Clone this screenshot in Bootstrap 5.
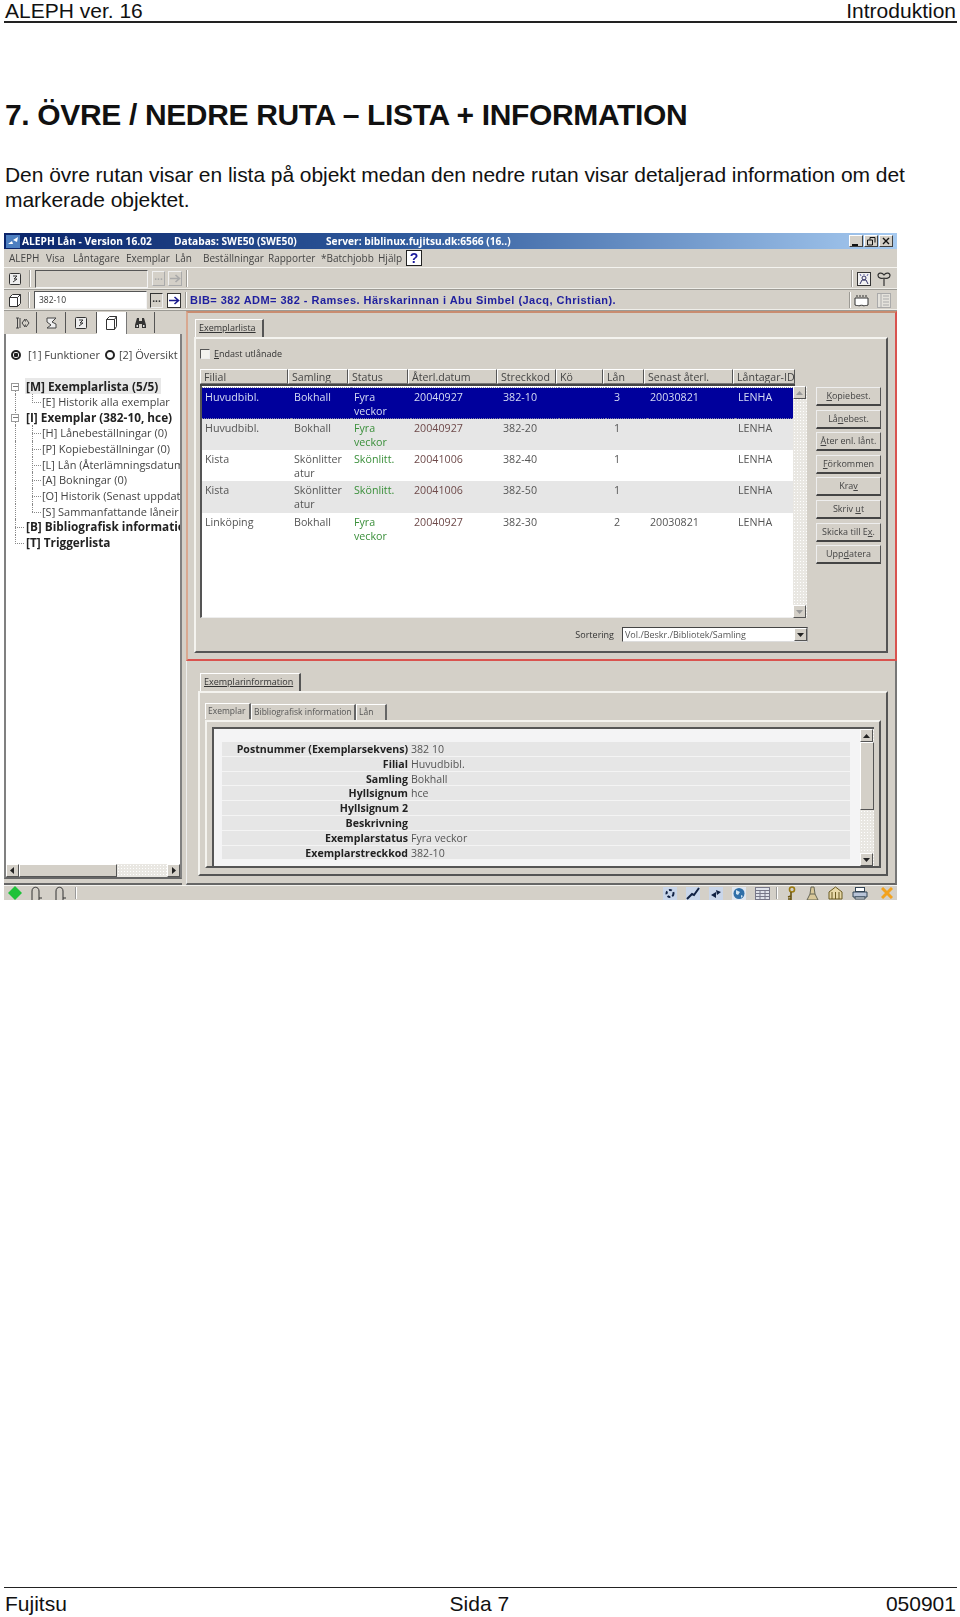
<!DOCTYPE html>
<html lang="sv">
<head>
  <meta charset="UTF-8">
  <title>ALEPH ver. 16 – Introduktion</title>
  <link href="https://cdn.jsdelivr.net/npm/bootstrap@5.3.2/dist/css/bootstrap.min.css" rel="stylesheet" />
  <style>
    html, body { height: 100%; }
    body {
      font-family: "Liberation Sans", Arial, sans-serif;
      background: #fff;
      color: #111;
      height: 1617px;
      overflow: hidden;
      padding: 0 3px 0 4px;
    }
    .page-head {
      height: 23px;
      border-bottom: 2px solid #222;
      font-size: 21px;
      line-height: 22px;
      padding: 0 1px;
    }
    .page-title {
      font-size: 30px;
      font-weight: 700;
      line-height: 34px;
      margin: 75px 0 0 1px;
      letter-spacing: -0.35px;
      white-space: nowrap;
    }
    .page-text {
      font-size: 21px;
      line-height: 25px;
      margin: 30px 0 0 1px;
      letter-spacing: -0.05px;
    }
    .page-foot {
      margin-top: auto;
      height: 30px;
      border-top: 1px solid #222;
      font-size: 21px;
      line-height: 31px;
      padding: 0 1px;
    }
    .foot-mid { margin-left: 6px; }

    /* the application window */
    .app {
      width: 893px;
      height: 667px;
      margin-top: 21px;
      background: #d4d0c8;
      color: #333;
      font-family: "Open Sans", "Liberation Sans", sans-serif;
      font-size: 10.5px;
      filter: blur(.35px);
      overflow: hidden;
      flex: none;
    }
    .app-title {
      height: 16px;
      background: linear-gradient(90deg, #0a246a 0%, #2f5a9c 45%, #a6caf0 100%);
      color: #fff;
      font-size: 10.2px;
      font-weight: 700;
      line-height: 16px;
      padding-left: 2px;
      white-space: nowrap;
    }
    .title-ico { margin-right: 2px; }
    .title-a, .title-b { width: 152px; }
    .win-ctrls { margin-right: 4px; }
    .win-btn {
      width: 14px;
      height: 12px;
      background: #d4d0c8;
      border: 1px solid;
      border-color: #fff #404040 #404040 #fff;
      margin-left: 1px;
    }
    .app-menu {
      height: 19px;
      line-height: 18px;
      padding-left: 5px;
      color: #444;
      border-bottom: 1px solid #f4f3ef;
      font-size: 10px;
    }
    .app-menu span:nth-child(1) { width: 37px; }
    .app-menu span:nth-child(2) { width: 27px; }
    .app-menu span:nth-child(3) { width: 53px; }
    .app-menu span:nth-child(4) { width: 49px; }
    .app-menu span:nth-child(5) { width: 28px; }
    .app-menu span:nth-child(6) { width: 65px; }
    .app-menu span:nth-child(7) { width: 53px; }
    .app-menu span:nth-child(8) { width: 57px; }
    .app-menu span:nth-child(9) { width: 28px; }
    .help-btn {
      width: 16px;
      height: 16px;
      background: #fff;
      border: 1px solid #222;
      color: #1a1a9c;
      font: 700 14px/14px "Liberation Sans", sans-serif;
      text-align: center;
    }
    .tool-row {
      border-bottom: 1px solid #9c9a94;
      box-shadow: inset 0 -1px 0 #efeee9;
    }
    .tool-a { height: 22px; }
    .tool-b { height: 21px; }
    .tool-sep {
      width: 2px;
      align-self: stretch;
      margin: 2px 0;
      border-left: 1px solid #9c9a94;
      border-right: 1px solid #fff;
    }
    .tool-input {
      width: 113px;
      height: 18px;
      margin-left: 4px;
      border: 1px solid;
      border-color: #555 #f4f4f4 #f4f4f4 #555;
      font-size: 8.5px;
      line-height: 16px;
      padding-left: 4px;
    }
    .dots-btn, .go-btn {
      height: 15px;
      border: 1px solid;
      border-color: #fff #555 #555 #fff;
      background: #d4d0c8;
      text-align: center;
      line-height: 9px;
      font-weight: 700;
      font-size: 10px;
    }
    .dots-btn { width: 13px; margin-left: 4px; }
    .go-btn { width: 14px; margin-left: 3px; }
    .is-off { color: #aaa; border-color: #f0f0f0 #aaa #aaa #f0f0f0; }
    .is-sunken { border-color: #333 #eee #eee #333; margin-left: 3px; }
    .go-btn.is-live { border-color: #333; margin-left: 4px; }
    .ico-a { margin: 0 8px 0 5px; }
    .ico-b { margin: 0 6px 0 4px; }
    .ico-c { margin-right: 6px; }
    .ico-d { margin: 0 8px 0 3px; }
    .bib-line {
      font: 700 11px/20px "Liberation Sans", sans-serif;
      color: #1e1e9e;
      letter-spacing: .47px;
      white-space: nowrap;
      margin-left: 3px;
    }
    .bib-sep { margin-left: 4px; }

    /* left pane */
    .left-pane { width: 178px; height: 574px; border-bottom: 2px solid #666; }
    .left-tabs { padding-left: 4px; }
    .left-tab {
      height: 21px;
      width: 29px;
      border-right: 1px solid #555;
      margin-top: 1px;
    }
    .left-tab:nth-child(3) { width: 31px; }
    .left-tab:nth-child(4) { width: 30px; }
    .left-tab:nth-child(5) { width: 28px; }
    .left-tab.is-on { background: #fff; height: 22px; border-right-color: #777; }
    .left-body {
      height: 530px;
      background: #fff;
      border-left: 2px solid #808080;
      border-right: 2px solid #808080;
      overflow: hidden;
      font-size: 11px;
      color: #444;
    }
    .radio-row { padding: 13px 0 0 5px; height: 44.5px; white-space: nowrap; line-height: 16px; }
    .win-radio {
      display: inline-block;
      width: 10px;
      height: 10px;
      border: 2px solid #222;
      border-radius: 50%;
      margin-right: 7px;
      vertical-align: -1px;
    }
    .win-radio.is-second { margin-left: 2px; margin-right: 4px; }
    .win-radio.is-on { background: radial-gradient(circle, #222 0 2px, #fff 2.5px); }
    .tree-row { height: 15.65px; line-height: 15.65px; white-space: nowrap; }
    .tree-gut { flex: none; position: relative; height: 100%; }
    .tree-gut.g1 { width: 20px; }
    .tree-gut.g2 { width: 36px; }
    .tree-v { position: absolute; top: 0; bottom: 0; border-left: 1px dotted #888; }
    .tree-v.v1 { left: 9px; }
    .tree-v.v2 { left: 26px; }
    .tree-v.v-first { top: 8px; }
    .tree-v.v-last { bottom: 7px; }
    .tree-h { position: absolute; top: 8px; width: 9px; height: 0; border-top: 1px dotted #888; }
    .tree-h.h1 { left: 9px; }
    .tree-h.h2 { left: 26px; }
    .tree-plus {
      position: absolute;
      left: 5px;
      top: 4px;
      width: 8px;
      height: 8px;
      border: 1px solid #999;
      background: linear-gradient(#777, #777) center / 5px 1px no-repeat #fff;
    }
    .tree-b { font-weight: 700; color: #222; font-size: 11.8px; }
    .tree-hi { background: #e8e8e8; padding-right: 3px; margin-left: -1px; padding-left: 1px; }
    .win-scroll-h {
      height: 15px;
      background: #d4d0c8;
      border-left: 2px solid #808080;
      border-right: 2px solid #808080;
      border-bottom: 2px solid #666;
    }
    .sb-btn {
      width: 13px;
      height: 13px;
      background: #d4d0c8;
      border: 1px solid;
      border-color: #fff #555 #555 #fff;
      display: flex;
      align-items: center;
      justify-content: center;
      flex: none;
    }
    .sb-track {
      background-color: #e9e7e2;
      background-image: radial-gradient(#fff 1px, transparent 1px);
      background-size: 3px 3px;
    }
    .sb-thumb { background: #d4d0c8; border: 1px solid; border-color: #fff #555 #555 #fff; }
    .win-scroll-h .sb-thumb { width: 98px; }

    /* upper pane */
    .right-col { width: 711px; margin-left: 4px; }
    .pane-top {
      height: 350px;
      border: 2px solid;
      border-color: #c98c70 #d9534f #d9534f #d8a890;
      padding: 6px 7px 6px 6px;
    }
    .win-tab {
      display: inline-block;
      background: #d4d0c8;
      border-top: 1px solid #fff;
      border-left: 1px solid #fff;
      border-right: 2px solid #555;
      height: 18px;
      line-height: 16px;
      font-size: 9px;
      padding: 0 6px 0 3px;
      vertical-align: top;
      margin-left: 1px;
    }
    .win-group {
      border: 1px solid;
      border-color: #f4f3ef #555 #555 #f4f3ef;
      border-width: 2px;
    }
    .upper-group { height: 316px; padding: 10px 0 0 4px; }
    .check-row { height: 10px; line-height: 10px; font-size: 9px; }
    .win-check {
      width: 10px;
      height: 10px;
      background: #f4f3ef;
      border: 1px solid;
      border-color: #555 #eee #eee #555;
      margin-right: 4px;
    }
    .list-head {
      width: 595px;
      height: 17px;
      margin-top: 10px;
      border-bottom: 2px solid #444;
    }
    .list-head > div {
      flex: none;
      height: 15px;
      line-height: 14px;
      padding-left: 3px;
      border: 1px solid;
      border-color: #fff #555 #777 #fff;
      font-size: 10.6px;
      overflow: hidden;
      white-space: nowrap;
      color: #444;
    }
    .list-head > div:nth-child(1) { width: 88px; }
    .list-head > div:nth-child(2),
    .list-head > div:nth-child(3) { width: 60px; }
    .list-head > div:nth-child(4),
    .list-head > div:nth-child(8) { width: 89px; }
    .list-head > div:nth-child(5) { width: 59px; }
    .list-head > div:nth-child(6) { width: 47px; }
    .list-head > div:nth-child(7) { width: 41px; }
    .list-head > div:nth-child(9) { width: 62px; }
    .list-body { height: 232px; width: 607px; }
    .list-table-wrap {
      width: 593px;
      background: #fff;
      border-left: 2px solid #555;
      border-bottom: 1px solid #eee;
    }
    .table.list-table {
      table-layout: fixed;
      width: 591px;
      margin: 1px 0 0;
      --bs-table-bg: transparent;
      font-size: 10.7px;
      line-height: 14px;
      color: #555;
    }
    .list-table col:nth-child(1),
    .list-table col:nth-child(4) { width: 89px; }
    .list-table col:nth-child(2),
    .list-table col:nth-child(3) { width: 60px; }
    .list-table col:nth-child(5) { width: 59px; }
    .list-table col:nth-child(6) { width: 47px; }
    .list-table col:nth-child(7) { width: 41px; }
    .list-table col:nth-child(8) { width: 88px; }
    .table.list-table td {
      padding: 2px 0 0 3px;
      height: 31.3px;
      border: 0;
      vertical-align: top;
      box-shadow: none;
      color: #555;
    }
    .table.list-table tr.is-alt td { background: #e6e6e6; }
    .table.list-table td.is-green { color: #3a8f3a; padding-right: 12px; }
    .table.list-table td.is-date { color: #6e4a4a; }
    .table.list-table tr.is-sel td {
      background: #00009c;
      color: #d6dcf4;
      border-top: 1px dotted #88a;
      border-bottom: 1px dotted #88a;
    }
    .win-scroll-v { width: 14px; background-color: #e9e7e2; flex: none; }
    .side-btns { width: 65px; gap: 3.6px; margin: 28px 0 0 9px; }
    .btn.win-btnx {
      height: 19px;
      padding: 0;
      font-size: 9px;
      line-height: 16px;
      color: #444;
      background: #d4d0c8;
      border: 1px solid;
      border-color: #eee #555 #444 #eee;
      border-width: 1px 1px 2px 1px;
      border-radius: 0;
    }
    .sort-row { width: 608px; height: 15px; margin-top: 9px; font-size: 9px; }
    .sort-box {
      width: 186px;
      height: 15px;
      margin-left: 8px;
      background: #fff;
      border: 1px solid;
      border-color: #444 #999 #ddd #444;
      line-height: 13px;
      padding-left: 2px;
      font-size: 9px;
      color: #555;
    }
    .sort-box .sb-btn { margin-left: auto; }

    /* lower pane */
    .pane-low {
      height: 224px;
      border-right: 2px solid #777;
      border-bottom: 2px solid #666;
      padding: 12px 7px 0 11px;
      border-left: 1px solid #eee;
    }
    .pane-low .win-tab { margin-left: 2px; }
    .lower-group { height: 185px; padding: 11px 5px 0 5px; }
    .inner-tab-row { height: 16px; }
    .inner-tab {
      height: 16px;
      line-height: 14px;
      font-size: 8.5px;
      padding-left: 2px;
      border-top: 1px solid #fff;
      border-left: 1px solid #fff;
      border-right: 2px solid #666;
      color: #555;
      white-space: nowrap;
    }
    .inner-tab:nth-child(1) { width: 46px; margin-top: -1px; }
    .inner-tab:nth-child(2) { width: 105px; }
    .inner-tab:nth-child(3) { width: 31px; }
    .inner-group { height: 148px; padding: 5px 5px 0 5px; }
    .info-box {
      height: 139px;
      background: #f4f4f5;
      border-left: 2px solid #555;
      border-top: 2px solid #555;
      padding-top: 13px;
    }
    .info-rows { width: 630px; margin: 0 10px 0 8px; }
    .info-row {
      height: 14.8px;
      line-height: 14px;
      background: #e6e6e6;
      border-bottom: 1px solid #f4f4f4;
      white-space: nowrap;
      font-size: 10.6px;
      color: #555;
    }
    .info-label { width: 186px; text-align: right; font-weight: 700; color: #222; margin-right: 3px; flex: none; }
    .info-scroll { margin-top: -13px; }
    .info-scroll .sb-thumb { height: 68px; }

    /* status bar */
    .status-bar { height: 15px; border-top: 1px solid #f4f3ef; padding-left: 4px; }
    .status-sep { width: 2px; height: 12px; border-left: 1px solid #999; border-right: 1px solid #fff; }
    .status-right { gap: 9px; padding-right: 4px; }
    .status-right .status-sep { margin: 0 -2px 0 -3px; }
    .book-a { margin-left: 8px; }
    .book-b { margin-left: 10px; }
    .book-sep { margin-left: 7px; }
    .print-gap { margin-right: 4px; }
    .abs-ico { flex: none; display: block; }
  </style>
  <script src="https://cdn.jsdelivr.net/npm/bootstrap@5.3.2/dist/js/bootstrap.bundle.min.js"></script>
</head>
<body class="d-flex flex-column">
  <div class="page-head d-flex justify-content-between">
    <span>ALEPH ver. 16</span>
    <span>Introduktion</span>
  </div>

  <h1 class="page-title">7. ÖVRE / NEDRE RUTA – LISTA + INFORMATION</h1>
  <p class="page-text mb-0">Den övre rutan visar en lista på objekt medan den nedre rutan visar detaljerad information om det markerade objektet.</p>

  <div class="app d-flex flex-column">
    <div class="app-title d-flex align-items-center">
      <svg class="abs-ico title-ico" width="14" height="13" viewBox="0 0 14 13"><rect width="14" height="13" fill="#4d7fc0"/><path d="M2 9l4-3 1 3zM7 5l5-3-1 5z" fill="#fff"/></svg>
      <span class="title-a">ALEPH Lån - Version 16.02</span>
      <span class="title-b">Databas: SWE50 (SWE50)</span>
      <span>Server: biblinux.fujitsu.dk:6566 (16..)</span>
      <div class="ms-auto d-flex win-ctrls">
        <div class="win-btn d-flex align-items-end justify-content-center"><svg width="8" height="8" viewBox="0 0 8 8"><path d="M0 7h6" stroke="#111" stroke-width="2"/></svg></div>
        <div class="win-btn d-flex align-items-center justify-content-center"><svg width="9" height="9" viewBox="0 0 9 9"><path d="M3 .5h5v5M3 .5v2M.5 3h5v5h-5z" fill="none" stroke="#111"/></svg></div>
        <div class="win-btn d-flex align-items-center justify-content-center"><svg width="8" height="8" viewBox="0 0 8 8"><path d="M1 1l6 6M7 1l-6 6" stroke="#111" stroke-width="1.4"/></svg></div>
      </div>
    </div>

    <div class="app-menu d-flex align-items-center">
      <span>ALEPH</span><span>Visa</span><span>Låntagare</span><span>Exemplar</span><span>Lån</span><span>Beställningar</span><span>Rapporter</span><span>*Batchjobb</span><span>Hjälp</span>
      <div class="help-btn">?</div>
    </div>

    <div class="tool-row tool-a d-flex align-items-center">
      <svg class="abs-ico ico-a" width="12" height="12" viewBox="0 0 12 12"><rect x=".5" y=".5" width="11" height="11" rx="1" fill="#eee" stroke="#333"/><path d="M4 3h4l-3 3h3l-4 3" fill="none" stroke="#333"/></svg>
      <div class="tool-sep"></div>
      <div class="tool-input"></div>
      <div class="dots-btn is-off">...</div>
      <div class="go-btn is-off d-flex align-items-center justify-content-center"><svg width="11" height="9" viewBox="0 0 11 9"><path d="M0 4.500h9M5.500 1l4 3.500-4 3.500" fill="none" stroke="#aaa" stroke-width="1.600"/></svg></div>
      <div class="tool-sep ms-1"></div>
      <div class="tool-sep ms-auto"></div>
      <svg class="abs-ico ico-b" width="14" height="14" viewBox="0 0 14 14"><rect x=".5" y=".5" width="13" height="13" fill="#f2f2f2" stroke="#333"/><circle cx="7" cy="6" r="2" fill="none" stroke="#336"/><path d="M3 12l2-4h4l2 4" fill="none" stroke="#336"/><path d="M3 2l1 2M7 2v1M11 2l-1 2" stroke="#66a"/></svg>
      <svg class="abs-ico ico-c" width="14" height="14" viewBox="0 0 14 14"><path d="M7 6v8M7 6C5 7 1 6 1 3.500S5 0 7 3C9 0 13 1 13 3.500S9 7 7 6" fill="none" stroke="#333" stroke-width="1.200"/></svg>
    </div>

    <div class="tool-row tool-b d-flex align-items-center">
      <svg class="abs-ico ico-b" width="14" height="14" viewBox="0 0 14 14"><path d="M1.500 4.500h8v9h-8zM1.500 4.500l3-3h8v9l-3 3M9.500 4.500l3-3" fill="#fff" stroke="#333"/></svg>
      <div class="tool-sep"></div>
      <div class="tool-input bg-white">382-10</div>
      <div class="dots-btn is-sunken">...</div>
      <div class="go-btn is-live bg-white d-flex align-items-center justify-content-center"><svg width="11" height="9" viewBox="0 0 11 9"><path d="M0 4.500h9M5.500 1l4 3.500-4 3.500" fill="none" stroke="#1a1a8c" stroke-width="1.600"/></svg></div>
      <div class="tool-sep bib-sep"></div>
      <div class="bib-line">BIB= 382 ADM= 382 - Ramses. Härskarinnan i Abu Simbel (Jacq, Christian).</div>
      <div class="tool-sep ms-auto"></div>
      <svg class="abs-ico ico-d" width="15" height="14" viewBox="0 0 15 14"><path d="M1 5h13v7c-2 1-3 0-4 1-1-1-4-1-5 0-1-1-2 0-4-1zM3 2v2M6 2v2M9 2v2M12 2v2" fill="#fff" stroke="#333"/></svg>
      <svg class="abs-ico ico-c" width="14" height="15" viewBox="0 0 14 15"><rect x=".5" y=".5" width="13" height="14" fill="#e4e2dc" stroke="#aaa"/><path d="M4 .5v14M6 3h6M6 6h6M6 9h6M6 12h6" stroke="#aaa"/></svg>
    </div>

    <div class="d-flex flex-grow-1">
      <div class="left-pane d-flex flex-column">
        <div class="left-tabs d-flex">
          <div class="left-tab d-flex align-items-center justify-content-center"><svg width="15" height="12" viewBox="0 0 15 12"><path d="M1 1h3M1 11h3M2.500 1v10M5 1v10M7 6l3-4v2h1M7 6l3 4V8h1M11 2l3 4-3 4" fill="none" stroke="#444"/></svg></div>
          <div class="left-tab d-flex align-items-center justify-content-center"><svg width="13" height="12" viewBox="0 0 13 12"><path d="M2 1h9L7 5l4 2v4H2l4-3-4-3z" fill="#eee" stroke="#444"/></svg></div>
          <div class="left-tab d-flex align-items-center justify-content-center"><svg width="12" height="12" viewBox="0 0 12 12"><rect x=".5" y=".5" width="11" height="11" rx="1" fill="#eee" stroke="#333"/><path d="M4 3h4l-3 3h3l-4 3" fill="none" stroke="#333"/></svg></div>
          <div class="left-tab is-on d-flex align-items-center justify-content-center"><svg width="13" height="14" viewBox="0 0 13 14"><path d="M1.500 3.500h8v10h-8zM1.500 3.500l3-3h7v10l-2 3M9.500 3.500l2-3" fill="#fff" stroke="#333"/></svg></div>
          <div class="left-tab d-flex align-items-center justify-content-center"><svg width="13" height="12" viewBox="0 0 13 12"><path d="M3 1h2v3h3V1h2l2 7v3H8V7H5v4H1V8z" fill="#333"/><rect x="2.500" y="8" width="1.500" height="2" fill="#ddd"/><rect x="9" y="8" width="1.500" height="2" fill="#ddd"/></svg></div>
        </div>
        <div class="left-body">
          <div class="radio-row"><span class="win-radio is-on"></span>[1] Funktioner <span class="win-radio is-second"></span>[2] Översikt</div>

          <div class="tree-row d-flex"><span class="tree-gut g1"><span class="tree-v v1 v-first"></span><span class="tree-plus"></span></span><span class="tree-b"><span class="tree-hi">[M] Exemplarlista (5/5)</span></span></div>
          <div class="tree-row d-flex"><span class="tree-gut g2"><span class="tree-v v1"></span><span class="tree-v v2 v-last"></span><span class="tree-h h2"></span></span>[E] Historik alla exemplar</div>
          <div class="tree-row d-flex"><span class="tree-gut g1"><span class="tree-v v1"></span><span class="tree-plus"></span></span><span class="tree-b">[I] Exemplar (382-10, hce)</span></div>
          <div class="tree-row d-flex"><span class="tree-gut g2"><span class="tree-v v1"></span><span class="tree-v v2"></span><span class="tree-h h2"></span></span>[H] Lånebeställningar (0)</div>
          <div class="tree-row d-flex"><span class="tree-gut g2"><span class="tree-v v1"></span><span class="tree-v v2"></span><span class="tree-h h2"></span></span>[P] Kopiebeställningar (0)</div>
          <div class="tree-row d-flex"><span class="tree-gut g2"><span class="tree-v v1"></span><span class="tree-v v2"></span><span class="tree-h h2"></span></span>[L] Lån (Återlämningsdatum</div>
          <div class="tree-row d-flex"><span class="tree-gut g2"><span class="tree-v v1"></span><span class="tree-v v2"></span><span class="tree-h h2"></span></span>[A] Bokningar (0)</div>
          <div class="tree-row d-flex"><span class="tree-gut g2"><span class="tree-v v1"></span><span class="tree-v v2"></span><span class="tree-h h2"></span></span>[O] Historik (Senast uppdat</div>
          <div class="tree-row d-flex"><span class="tree-gut g2"><span class="tree-v v1"></span><span class="tree-v v2 v-last"></span><span class="tree-h h2"></span></span>[S] Sammanfattande låneir</div>
          <div class="tree-row d-flex"><span class="tree-gut g1"><span class="tree-v v1"></span><span class="tree-h h1"></span></span><span class="tree-b">[B] Bibliografisk information</span></div>
          <div class="tree-row d-flex"><span class="tree-gut g1"><span class="tree-v v1 v-last"></span><span class="tree-h h1"></span></span><span class="tree-b">[T] Triggerlista</span></div>
        </div>
        <div class="win-scroll-h d-flex">
          <div class="sb-btn"><svg width="5" height="7" viewBox="0 0 5 7"><path d="M4 0v7L0 3.500z" fill="#222"/></svg></div>
          <div class="sb-thumb"></div>
          <div class="sb-track flex-grow-1"></div>
          <div class="sb-btn"><svg width="5" height="7" viewBox="0 0 5 7"><path d="M1 0v7l4-3.500z" fill="#222"/></svg></div>
        </div>
      </div>

      <div class="right-col">
        <div class="pane-top">
          <div class="win-tab"><u>Exemplarlista</u></div>
          <div class="win-group upper-group">
            <div class="check-row d-flex align-items-center"><span class="win-check"></span><span><u>E</u>ndast utlånade</span></div>
            <div class="d-flex">
              <div>
                <div class="list-head d-flex">
                  <div>Filial</div>
                  <div>Samling</div>
                  <div>Status</div>
                  <div>Återl.datum</div>
                  <div>Streckkod</div>
                  <div>Kö</div>
                  <div>Lån</div>
                  <div>Senast återl.</div>
                  <div>Låntagar-ID</div>
                </div>
                <div class="list-body d-flex">
                  <div class="list-table-wrap">
                    <table class="table list-table">
                      <colgroup><col><col><col><col><col><col><col><col><col></colgroup>
                      <tbody>
                        <tr class="is-sel"><td>Huvudbibl.</td><td>Bokhall</td><td class="is-green">Fyra veckor</td><td class="is-date">20040927</td><td>382-10</td><td></td><td class="ps-2">3</td><td>20030821</td><td>LENHA</td></tr>
                        <tr class="is-alt"><td>Huvudbibl.</td><td>Bokhall</td><td class="is-green">Fyra veckor</td><td class="is-date">20040927</td><td>382-20</td><td></td><td class="ps-2">1</td><td></td><td>LENHA</td></tr>
                        <tr><td>Kista</td><td>Skönlitter atur</td><td class="is-green">Skönlitt.</td><td class="is-date">20041006</td><td>382-40</td><td></td><td class="ps-2">1</td><td></td><td>LENHA</td></tr>
                        <tr class="is-alt"><td>Kista</td><td>Skönlitter atur</td><td class="is-green">Skönlitt.</td><td class="is-date">20041006</td><td>382-50</td><td></td><td class="ps-2">1</td><td></td><td>LENHA</td></tr>
                        <tr><td>Linköping</td><td>Bokhall</td><td class="is-green">Fyra veckor</td><td class="is-date">20040927</td><td>382-30</td><td></td><td class="ps-2">2</td><td>20030821</td><td>LENHA</td></tr>
                      </tbody>
                    </table>
                  </div>
                  <div class="win-scroll-v sb-track d-flex flex-column">
                    <div class="sb-btn"><svg width="7" height="4" viewBox="0 0 7 4"><path d="M0 4h7L3.500 0z" fill="#999"/></svg></div>
                    <div class="sb-btn mt-auto"><svg width="7" height="4" viewBox="0 0 7 4"><path d="M0 0h7L3.500 4z" fill="#999"/></svg></div>
                  </div>
                </div>
              </div>
              <div class="side-btns d-flex flex-column">
                <button class="btn win-btnx" type="button"><u>K</u>opiebest.</button>
                <button class="btn win-btnx" type="button">Lå<u>n</u>ebest.</button>
                <button class="btn win-btnx" type="button"><u>Å</u>ter enl. lånt.</button>
                <button class="btn win-btnx" type="button"><u>F</u>örkommen</button>
                <button class="btn win-btnx" type="button">Kra<u>v</u></button>
                <button class="btn win-btnx" type="button">Skriv <u>u</u>t</button>
                <button class="btn win-btnx" type="button">Skicka till E<u>x</u>.</button>
                <button class="btn win-btnx" type="button">Upp<u>d</u>atera</button>
              </div>
            </div>
            <div class="sort-row d-flex align-items-center justify-content-end">
              <span>Sortering</span>
              <div class="sort-box d-flex">
                <span>Vol./Beskr./Bibliotek/Samling</span>
                <div class="sb-btn"><svg width="7" height="4" viewBox="0 0 7 4"><path d="M0 0h7L3.500 4z" fill="#222"/></svg></div>
              </div>
            </div>
          </div>
        </div>

        <div class="pane-low">
          <div class="win-tab"><u>Exemplarinformation</u></div>
          <div class="win-group lower-group">
            <div class="inner-tab-row d-flex">
              <div class="inner-tab">Exemplar</div>
              <div class="inner-tab">Bibliografisk information</div>
              <div class="inner-tab">Lån</div>
            </div>
            <div class="win-group inner-group">
              <div class="info-box d-flex">
                <div class="info-rows">
                  <div class="info-row d-flex"><span class="info-label">Postnummer (Exemplarsekvens)</span>382 10</div>
                  <div class="info-row d-flex"><span class="info-label">Filial</span>Huvudbibl.</div>
                  <div class="info-row d-flex"><span class="info-label">Samling</span>Bokhall</div>
                  <div class="info-row d-flex"><span class="info-label">Hyllsignum</span>hce</div>
                  <div class="info-row d-flex"><span class="info-label">Hyllsignum 2</span></div>
                  <div class="info-row d-flex"><span class="info-label">Beskrivning</span></div>
                  <div class="info-row d-flex"><span class="info-label">Exemplarstatus</span>Fyra veckor</div>
                  <div class="info-row d-flex"><span class="info-label">Exemplarstreckkod</span>382-10</div>
                </div>
                <div class="win-scroll-v info-scroll sb-track ms-auto d-flex flex-column">
                  <div class="sb-btn"><svg width="7" height="4" viewBox="0 0 7 4"><path d="M0 4h7L3.500 0z" fill="#222"/></svg></div>
                  <div class="sb-thumb"></div>
                  <div class="sb-btn mt-auto"><svg width="7" height="4" viewBox="0 0 7 4"><path d="M0 0h7L3.500 4z" fill="#222"/></svg></div>
                </div>
              </div>
            </div>
          </div>
        </div>
      </div>
    </div>

    <div class="status-bar d-flex align-items-center">
      <svg class="abs-ico" width="14" height="14" viewBox="0 0 14 14"><path d="M7 0l7 7-7 7-7-7z" fill="#1fc23a"/></svg>
      <svg class="abs-ico book-a" width="14" height="14" viewBox="0 0 14 14"><path d="M2 14V5c0-5 7-5 7 0v9M9 12h3" fill="none" stroke="#333"/></svg>
      <svg class="abs-ico book-b" width="14" height="14" viewBox="0 0 14 14"><path d="M2 14V5c0-5 7-5 7 0v9M9 12h3" fill="none" stroke="#333"/></svg>
      <div class="status-sep book-sep"></div>
      <div class="status-right ms-auto d-flex align-items-center">
        <svg class="abs-ico" width="14" height="13" viewBox="0 0 14 13"><rect width="14" height="13" fill="#c9d6ea"/><circle cx="7" cy="6.500" r="3.500" fill="none" stroke="#124" stroke-width="2" stroke-dasharray="3 2"/></svg>
        <svg class="abs-ico" width="14" height="13" viewBox="0 0 14 13"><rect width="14" height="13" fill="#c9d6ea"/><path d="M1 12l5-5 2 1 5-7" fill="none" stroke="#124" stroke-width="2"/></svg>
        <svg class="abs-ico" width="14" height="13" viewBox="0 0 14 13"><rect width="14" height="13" fill="#c9d6ea"/><path d="M2 8l5-3v6zM7 3l5 2-4 3z" fill="#124"/></svg>
        <svg class="abs-ico" width="14" height="13" viewBox="0 0 14 13"><rect width="14" height="13" fill="#dfe6ef"/><circle cx="7" cy="6.500" r="5.500" fill="#2f6fa8"/><path d="M4 3l4 2-2 3-2-1zM9 8l2 1-2 2z" fill="#cfe3f2"/></svg>
        <svg class="abs-ico" width="15" height="13" viewBox="0 0 15 13"><rect x=".5" y=".5" width="14" height="12" fill="#dfe2ea" stroke="#778"/><path d="M.5 3.500h14M.5 6.500h14M.5 9.500h14M5 3.500v9M10 3.500v9" stroke="#778"/></svg>
        <div class="status-sep"></div>
        <svg class="abs-ico" width="12" height="15" viewBox="0 0 12 15"><circle cx="7" cy="3.500" r="2.500" fill="none" stroke="#9a7a10" stroke-width="1.600"/><path d="M6 6v8M6 10l-3 1M6 13H3" stroke="#6a5410" stroke-width="1.600"/></svg>
        <svg class="abs-ico" width="13" height="15" viewBox="0 0 13 15"><path d="M5 1h3l1 7 3 6H1l3-6z" fill="#d8c79a" stroke="#665"/><path d="M4 8h5" stroke="#665"/></svg>
        <svg class="abs-ico" width="15" height="14" viewBox="0 0 15 14"><path d="M1 6l6.500-5L14 6v7H1z" fill="#e8d9a8" stroke="#6a5a20"/><path d="M4 6v7M7.500 6v7M11 6v7" stroke="#6a5a20"/></svg>
        <svg class="abs-ico print-gap" width="16" height="13" viewBox="0 0 16 13"><rect x="3.500" y=".5" width="9" height="4" fill="#fff" stroke="#345"/><path d="M1 5h14v5H1z" fill="#b8c4d8" stroke="#345"/><path d="M3 10h10v2H3z" fill="#fff" stroke="#345"/></svg>
        <svg class="abs-ico" width="12" height="12" viewBox="0 0 12 12"><path d="M1 1l10 10M11 1L1 11" stroke="#f2a21e" stroke-width="3"/></svg>
      </div>
    </div>
  </div>

  <div class="page-foot d-flex justify-content-between">
    <span>Fujitsu</span>
    <span class="foot-mid">Sida 7</span>
    <span>050901</span>
  </div>
</body>
</html>
